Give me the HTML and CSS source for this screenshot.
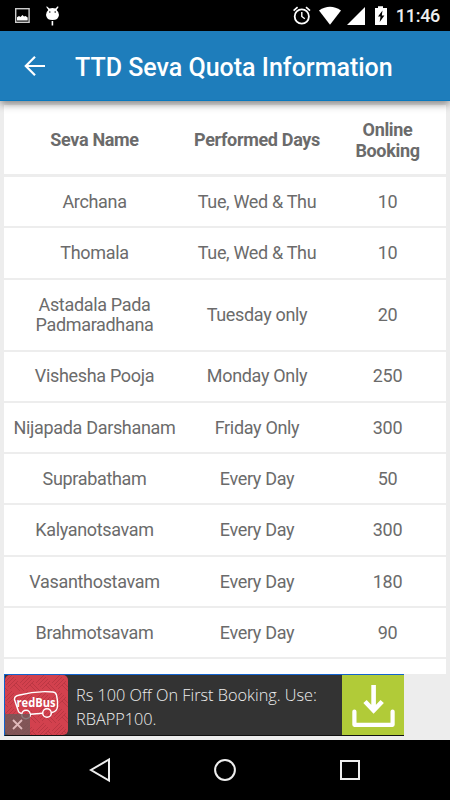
FILE: index.html
```html
<!DOCTYPE html>
<html lang="en">
<head>
    <meta charset="UTF-8">
    <meta name="viewport" content="width=device-width, initial-scale=1.0">
    <title>TTD Seva Quota Information</title>
    <link rel="stylesheet" href="styles.css">
</head>
<body>
    <div class="status-bar">
        <svg class="status-left" width="70" height="31" viewBox="0 0 70 31">
            <rect x="15.7" y="8.7" width="13.4" height="13.6" fill="none" stroke="#ccc" stroke-width="1.4"/>
            <path d="M17 20.5v-3.3l2-1.2 1.5 1 2-2 1.5 1.5 1.5-.5 2.2 1.5v3z" fill="#fff"/>
            <path d="M46.8 6.3l2.6 2.2q3.2-1.2 6 0l2.4-2.2.8.6-2 3q2.6 2.2 2.4 5-.7 5.2-6.500 5.200T46 14.900q-.1-2.800 2.300-4.900l-2-3z" fill="#fff"/>
            <rect x="51.6" y="21" width="1.6" height="4.5" fill="#fff"/>
            <circle cx="49.8" cy="12" r=".8" fill="#111"/>
            <circle cx="55.2" cy="12" r=".8" fill="#111"/>
        </svg>
        <div class="status-right">
            <svg width="97" height="31" viewBox="290 0 97 31">
                <circle cx="301.8" cy="16.5" r="7.1" fill="none" stroke="#fff" stroke-width="1.8"/>
                <path d="M301.8 12v4.5l3 2.2" fill="none" stroke="#fff" stroke-width="1.4"/>
                <path d="M293.6 10.6l4-3.400M310 10.600l-4-3.400" stroke="#fff" stroke-width="1.7"/>
                <path d="M319 10.5q11-7.500 22 0L330 24.800z" fill="#fff"/>
                <path d="M365 7v18h-18z" fill="#fff"/>
                <path d="M375 8h3V6.200h5V8h4v17h-12z" fill="#fff"/>
                <path d="M382.5 10.500l-4.500 6h2.500l-.8 5.500 4.700-6.500h-2.600z" fill="#000"/>
            </svg>
            <span class="clock">11:46</span>
        </div>
    </div>

    <header class="app-bar">
        <svg class="back" width="22" height="22" viewBox="0 0 22 22">
            <path d="M21 11H2.5M11 1.800L1.800 11l9.200 9.200" fill="none" stroke="#fff" stroke-width="2.2"/>
        </svg>
        <h1>TTD Seva Quota Information</h1>
    </header>

    <main class="content">
        <table class="quota">
            <tr class="head">
                <th class="name">Seva Name</th>
                <th class="days">Performed Days</th>
                <th class="count">Online<br>Booking</th>
            </tr>
            <tr><td>Archana</td><td>Tue, Wed &amp; Thu</td><td>10</td></tr>
            <tr><td>Thomala</td><td>Tue, Wed &amp; Thu</td><td>10</td></tr>
            <tr class="tall"><td>Astadala Pada<br>Padmaradhana</td><td>Tuesday only</td><td>20</td></tr>
            <tr><td>Vishesha Pooja</td><td>Monday Only</td><td>250</td></tr>
            <tr><td>Nijapada Darshanam</td><td>Friday Only</td><td>300</td></tr>
            <tr><td>Suprabatham</td><td>Every Day</td><td>50</td></tr>
            <tr><td>Kalyanotsavam</td><td>Every Day</td><td>300</td></tr>
            <tr><td>Vasanthostavam</td><td>Every Day</td><td>180</td></tr>
            <tr><td>Brahmotsavam</td><td>Every Day</td><td>90</td></tr>
            <tr><td></td><td></td><td></td></tr>
        </table>
    </main>

    <div class="ad-row">
        <div class="ad">
            <div class="ad-logo">
                <svg width="64" height="60" viewBox="0 0 64 60">
                    <defs>
                        <pattern id="weave" width="16" height="16" patternUnits="userSpaceOnUse">
                            <path d="M0 8l8-8M2 10l8-8M4 12l8-8M6 14l8-8M10 10l6 6M12 8l4 4M0 12l4 4M0 16l-1-1" stroke="#b93642" stroke-width=".9"/>
                        </pattern>
                    </defs>
                    <rect x="1" width="63" height="60" rx="5" fill="#d2414e"/>
                    <rect x="1" width="63" height="60" rx="5" fill="url(#weave)"/>
                    <path d="M17.5 38.500q-3-.5-3.500-3.500L10.500 24.500q-.3-3.500 4-4.300Q32 15.500 49 17q3 .3 3.600 3.500 1.400 6 .9 11-.5 5-5.500 6M38.500 38.300l-12 1" fill="none" stroke="#fff" stroke-width="1.4"/>
                    <circle cx="22" cy="39.5" r="4.3" fill="none" stroke="#fff" stroke-width="1.5"/>
                    <circle cx="43" cy="38" r="4.3" fill="none" stroke="#fff" stroke-width="1.5"/>
                    <text x="12.5" y="31.5" class="brand" textLength="39" lengthAdjust="spacingAndGlyphs">redBus</text>
                </svg>
                <span class="close">
                    <svg width="11" height="11" viewBox="0 0 11 11"><path d="M1 1l9 9M10 1l-9 9" stroke="#e0b9bb" stroke-width="1.8"/></svg>
                </span>
            </div>
            <p class="ad-text">Rs 100 Off On First Booking. Use:<br>RBAPP100.</p>
            <div class="ad-get">
                <svg width="62" height="60" viewBox="0 0 62 60">
                    <path d="M12.4 36.500v13.300h38.200V36.500" fill="none" stroke="#fff" stroke-width="4.2" stroke-linejoin="round" stroke-linecap="round"/>
                    <path d="M31.6 10v25M23 26.500l8.600 9 8.600-9" fill="none" stroke="#fff" stroke-width="4.6"/>
                </svg>
            </div>
        </div>
    </div>

    <nav class="nav-bar">
        <svg width="450" height="60" viewBox="0 0 450 60">
            <path d="M109 19.5v21L91 30z" fill="none" stroke="#eee" stroke-width="2"/>
            <circle cx="225" cy="30" r="9.9" fill="none" stroke="#eee" stroke-width="2"/>
            <rect x="341" y="21" width="18" height="18" fill="none" stroke="#eee" stroke-width="2"/>
        </svg>
    </nav>
</body>
</html>
```
FILE: styles.css
```css
body {
    margin: 0;
    width: 450px;
    height: 800px;
    display: flex;
    flex-direction: column;
    overflow: hidden;
    background: #ededed;
    font-family: Roboto, sans-serif;
    color: #6b6b6b;
}
svg {
    display: block;
}
.status-bar {
    height: 31px;
    display: flex;
    justify-content: space-between;
    background: #000;
    color: #fff;
}
.status-right {
    display: flex;
    align-items: center;
    padding-right: 10px;
}
.clock {
    width: 53px;
    text-align: right;
    font-size: 18px;
    letter-spacing: -0.3px;
    font-weight: 500;
    line-height: 30px;
    padding-top: 1px;
    color: #eee;
}
.app-bar {
    height: 70px;
    box-sizing: border-box;
    display: flex;
    align-items: center;
    gap: 29px;
    padding: 0 0 0 24px;
    background: #1e7dbb;
    border-bottom: 1px solid #0878be;
    box-shadow: 0 3px 8px rgba(0, 0, 0, 0.45);
    z-index: 1;
}
h1 {
    margin: 0;
    padding-top: 4px;
    font-size: 25px;
    font-weight: 500;
    color: #fff;
    white-space: nowrap;
}
.content {
    height: 569px;
    padding: 4px 4px 0;
    overflow: hidden;
}
.quota {
    width: 442px;
    table-layout: fixed;
    border-collapse: separate;
    border-spacing: 0;
    background: #fff;
    font-size: 18px;
    letter-spacing: -0.33px;
    line-height: 20.5px;
    text-align: center;
}
th, td {
    height: 51.3px;
    box-sizing: border-box;
    padding: 1px 0 0;
    border-bottom: 2px solid #ededed;
}
th {
    height: 72px;
    padding-top: 2px;
    border-bottom-width: 3px;
    font-weight: 700;
}
.tall td {
    height: 72px;
}
.name {
    width: 181px;
}
.days {
    width: 144px;
}
.ad-row {
    height: 66px;
    padding-left: 4px;
}
.ad {
    width: 400px;
    height: 62px;
    box-sizing: border-box;
    display: flex;
    border-top: 1px solid #1263cf;
    border-left: 1px solid #1263cf;
    border-bottom: 1px solid #111;
    background: #333;
}
.ad-logo {
    position: relative;
    width: 63px;
}
.ad-logo > svg {
    margin-left: -1px;
}
.brand {
    font: bold 13px "Open Sans", sans-serif;
    fill: #fff;
}
.close {
    position: absolute;
    left: 0;
    bottom: 0;
    width: 25px;
    height: 21px;
    display: flex;
    align-items: center;
    justify-content: center;
    background: rgba(110, 90, 90, 0.8);
}
.ad-text {
    flex: 1;
    margin: 0;
    padding: 8px 0 0 8px;
    font: 300 16.3px/24px "Open Sans", sans-serif;
    color: #eee;
    white-space: nowrap;
}
.ad-get {
    width: 62px;
    background: #b1cb38;
}
.nav-bar {
    height: 60px;
    background: #000;
}
```
